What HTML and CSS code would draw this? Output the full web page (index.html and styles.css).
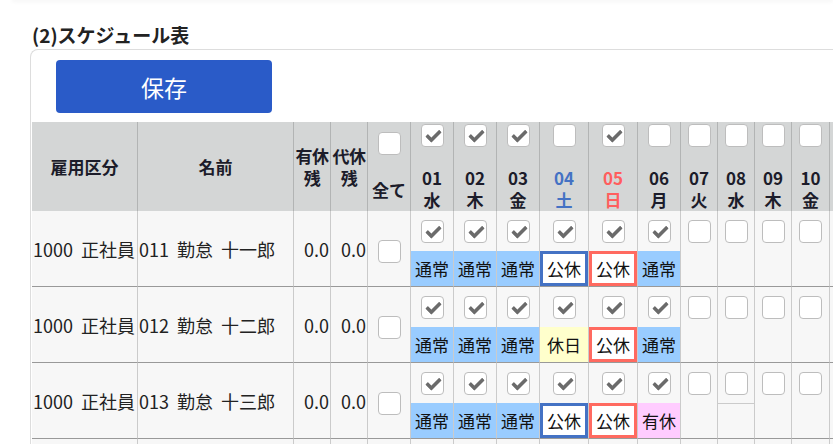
FILE: index.html
```html
<!DOCTYPE html>
<html lang="ja">
<head>
    <meta charset="UTF-8">
    <meta name="viewport" content="width=device-width, initial-scale=1.0">
    <title>スケジュール表</title>
    <link rel="stylesheet" href="styles.css">
</head>
<body>
    <div class="prev-card"></div>
    <h2 class="section-title">(2)スケジュール表</h2>
    <div class="card">
        <button class="save-button" type="button">保存</button>
        <table class="schedule">
            <colgroup>
                <col style="width:106px"><col style="width:156px"><col style="width:37px"><col style="width:37px"><col style="width:43px">
                <col style="width:43px"><col style="width:43px"><col style="width:43px"><col style="width:49px"><col style="width:49px">
                <col style="width:43px"><col style="width:37px"><col style="width:37px"><col style="width:37px"><col style="width:38px">
                <col style="width:43px"><col style="width:43px">
            </colgroup>
            <thead>
                <tr>
                    <th>雇用区分</th>
                    <th>名前</th>
                    <th class="tight">有休<br>残</th>
                    <th class="tight">代休<br>残</th>
                    <th class="all-head"><span class="cb"></span><span class="all-label">全て</span></th>
                    <th class="day"><div class="day-head"><span class="cb on"></span><span>01<br>水</span></div></th>
                    <th class="day"><div class="day-head"><span class="cb on"></span><span>02<br>木</span></div></th>
                    <th class="day"><div class="day-head"><span class="cb on"></span><span>03<br>金</span></div></th>
                    <th class="day sat"><div class="day-head"><span class="cb"></span><span>04<br>土</span></div></th>
                    <th class="day sun"><div class="day-head"><span class="cb on"></span><span>05<br>日</span></div></th>
                    <th class="day"><div class="day-head"><span class="cb"></span><span>06<br>月</span></div></th>
                    <th class="day"><div class="day-head"><span class="cb"></span><span>07<br>火</span></div></th>
                    <th class="day"><div class="day-head"><span class="cb"></span><span>08<br>水</span></div></th>
                    <th class="day"><div class="day-head"><span class="cb"></span><span>09<br>木</span></div></th>
                    <th class="day"><div class="day-head"><span class="cb"></span><span>10<br>金</span></div></th>
                    <th class="day sat"><div class="day-head"><span class="cb"></span><span>11<br>土</span></div></th>
                    <th class="day sun"><div class="day-head"><span class="cb"></span><span>12<br>日</span></div></th>
                </tr>
            </thead>
            <tbody>
                <tr>
                    <td>1000 正社員</td>
                    <td>011 勤怠 十一郎</td>
                    <td class="num">0.0</td>
                    <td class="num">0.0</td>
                    <td class="center"><span class="cb"></span></td>
                    <td class="day"><div class="chk-area"><span class="cb on"></span></div><div class="shift normal">通常</div></td>
                    <td class="day"><div class="chk-area"><span class="cb on"></span></div><div class="shift normal">通常</div></td>
                    <td class="day"><div class="chk-area"><span class="cb on"></span></div><div class="shift normal">通常</div></td>
                    <td class="day"><div class="chk-area"><span class="cb on"></span></div><div class="shift off sat">公休</div></td>
                    <td class="day"><div class="chk-area"><span class="cb on"></span></div><div class="shift off sun">公休</div></td>
                    <td class="day"><div class="chk-area"><span class="cb on"></span></div><div class="shift normal">通常</div></td>
                    <td class="day"><div class="chk-area"><span class="cb"></span></div></td>
                    <td class="day"><div class="chk-area"><span class="cb"></span></div></td>
                    <td class="day"><div class="chk-area"><span class="cb"></span></div></td>
                    <td class="day"><div class="chk-area"><span class="cb"></span></div></td>
                    <td class="day"><div class="chk-area"><span class="cb"></span></div></td>
                    <td class="day"><div class="chk-area"><span class="cb"></span></div></td>
                </tr>
                <tr>
                    <td>1000 正社員</td>
                    <td>012 勤怠 十二郎</td>
                    <td class="num">0.0</td>
                    <td class="num">0.0</td>
                    <td class="center"><span class="cb"></span></td>
                    <td class="day"><div class="chk-area"><span class="cb on"></span></div><div class="shift normal">通常</div></td>
                    <td class="day"><div class="chk-area"><span class="cb on"></span></div><div class="shift normal">通常</div></td>
                    <td class="day"><div class="chk-area"><span class="cb on"></span></div><div class="shift normal">通常</div></td>
                    <td class="day"><div class="chk-area"><span class="cb on"></span></div><div class="shift holiday">休日</div></td>
                    <td class="day"><div class="chk-area"><span class="cb on"></span></div><div class="shift off sun">公休</div></td>
                    <td class="day"><div class="chk-area"><span class="cb on"></span></div><div class="shift normal">通常</div></td>
                    <td class="day"><div class="chk-area"><span class="cb"></span></div></td>
                    <td class="day"><div class="chk-area"><span class="cb"></span></div></td>
                    <td class="day"><div class="chk-area"><span class="cb"></span></div></td>
                    <td class="day"><div class="chk-area"><span class="cb"></span></div></td>
                    <td class="day"><div class="chk-area"><span class="cb"></span></div></td>
                    <td class="day"><div class="chk-area"><span class="cb"></span></div></td>
                </tr>
                <tr>
                    <td>1000 正社員</td>
                    <td>013 勤怠 十三郎</td>
                    <td class="num">0.0</td>
                    <td class="num">0.0</td>
                    <td class="center"><span class="cb"></span></td>
                    <td class="day"><div class="chk-area"><span class="cb on"></span></div><div class="shift normal">通常</div></td>
                    <td class="day"><div class="chk-area"><span class="cb on"></span></div><div class="shift normal">通常</div></td>
                    <td class="day"><div class="chk-area"><span class="cb on"></span></div><div class="shift normal">通常</div></td>
                    <td class="day"><div class="chk-area"><span class="cb on"></span></div><div class="shift off sat">公休</div></td>
                    <td class="day"><div class="chk-area"><span class="cb on"></span></div><div class="shift off sun">公休</div></td>
                    <td class="day"><div class="chk-area"><span class="cb on"></span></div><div class="shift paid">有休</div></td>
                    <td class="day"><div class="chk-area"><span class="cb"></span></div></td>
                    <td class="day"><div class="chk-area"><span class="cb"></span></div><div class="shift empty"></div></td>
                    <td class="day"><div class="chk-area"><span class="cb"></span></div></td>
                    <td class="day"><div class="chk-area"><span class="cb"></span></div></td>
                    <td class="day"><div class="chk-area"><span class="cb"></span></div></td>
                    <td class="day"><div class="chk-area"><span class="cb"></span></div></td>
                </tr>
                <tr>
                    <td>1000 正社員</td>
                    <td>014 勤怠 十四郎</td>
                    <td class="num">0.0</td>
                    <td class="num">0.0</td>
                    <td class="center"><span class="cb"></span></td>
                    <td class="day"><div class="chk-area"><span class="cb on"></span></div><div class="shift normal">通常</div></td>
                    <td class="day"><div class="chk-area"><span class="cb on"></span></div><div class="shift normal">通常</div></td>
                    <td class="day"><div class="chk-area"><span class="cb on"></span></div><div class="shift normal">通常</div></td>
                    <td class="day"><div class="chk-area"><span class="cb on"></span></div><div class="shift off sat">公休</div></td>
                    <td class="day"><div class="chk-area"><span class="cb on"></span></div><div class="shift off sun">公休</div></td>
                    <td class="day"><div class="chk-area"><span class="cb on"></span></div><div class="shift normal">通常</div></td>
                    <td class="day"><div class="chk-area"><span class="cb"></span></div></td>
                    <td class="day"><div class="chk-area"><span class="cb"></span></div></td>
                    <td class="day"><div class="chk-area"><span class="cb"></span></div></td>
                    <td class="day"><div class="chk-area"><span class="cb"></span></div></td>
                    <td class="day"><div class="chk-area"><span class="cb"></span></div></td>
                    <td class="day"><div class="chk-area"><span class="cb"></span></div></td>
                </tr>
            </tbody>
        </table>
    </div>
</body>
</html>
```

FILE: styles.css
```css
html, body {
    overflow: hidden;
}
body {
    margin: 0;
    padding: 0;
    font-family: "Noto Sans CJK JP", "Noto Sans", sans-serif;
    color: #222;
    background-color: #fff;
}
.prev-card {
    height: 2px;
    margin-left: 12px;
    margin-top: -2px;
    background-color: #fff;
    box-shadow: 0 1px 4px rgba(0, 0, 0, 0.08);
}
.section-title {
    margin: 22px 0 1px 32px;
    font-size: 19px;
    line-height: 26px;
    font-weight: bold;
    color: #222;
}
.card {
    width: max-content;
    margin-left: 30px;
    padding: 10px 0 0 1px;
    border: 1px solid #ddd;
    border-right: none;
    border-radius: 8px 0 0 0;
    background-color: #fff;
}
.save-button {
    display: block;
    width: 216px;
    height: 53px;
    margin: 0 0 9px 24px;
    padding: 0;
    background-color: #2a5bc8;
    color: #fff;
    border: none;
    border-radius: 4px;
    font-family: inherit;
    font-size: 23px;
    cursor: pointer;
}
.schedule {
    table-layout: fixed;
    border-collapse: separate;
    border-spacing: 0;
    width: 843px;
}
.schedule th,
.schedule td {
    padding: 0;
    border-right: 1px solid #cbcbcb;
    white-space: nowrap;
    overflow: hidden;
}
.schedule th {
    height: 89px;
    background-color: #d4d6d6;
    border-right-color: #b2b4b4;
    font-size: 17px;
    line-height: 22px;
    font-weight: bold;
    color: #1c1c2a;
    text-align: center;
    vertical-align: middle;
}
.schedule th.tight {
    letter-spacing: -0.5px;
    overflow: visible;
}
.all-head .cb {
    display: block;
    margin: 0 auto 24px;
}
.all-label {
    display: block;
}
.schedule th.day {
    vertical-align: top;
}
.day-head {
    display: flex;
    flex-direction: column;
    align-items: center;
    justify-content: space-between;
    height: 87px;
    padding-top: 2px;
}
.schedule th.sat {
    color: #4472c4;
}
.schedule th.sun {
    color: #ff5e5e;
}
.schedule td {
    height: 75px;
    background-color: #f7f7f7;
    border-bottom: 1px solid #999;
    font-size: 18px;
    word-spacing: 4px;
    vertical-align: middle;
    padding-left: 1px;
}
.schedule td.num {
    text-align: right;
    padding: 0 1px 0 0;
}
.schedule td.center {
    text-align: center;
    padding: 0;
}
.schedule td.center .cb {
    vertical-align: middle;
    margin-top: 3px;
}
.schedule td.day {
    padding: 0;
    vertical-align: top;
}
.chk-area {
    height: 40px;
    display: flex;
    align-items: center;
    justify-content: center;
}
.shift {
    height: 35px;
    box-sizing: border-box;
    font-size: 17px;
    line-height: 35px;
    text-align: center;
    color: #111;
}
.shift.normal {
    background-color: #99ccff;
}
.shift.holiday {
    background-color: #ffffcc;
}
.shift.paid {
    background-color: #ffccff;
}
.shift.off {
    background-color: #fff;
    line-height: 29px;
    border: 3px solid #fff;
}
.shift.off.sat {
    border-color: #4472c4;
}
.shift.off.sun {
    border-color: #ff6a60;
}
.shift.empty {
    border-top: 1px solid #cbcbcb;
}
.cb {
    display: inline-block;
    box-sizing: border-box;
    width: 23px;
    height: 23px;
    background-color: #fff;
    border: 1px solid #bdbdbd;
    border-radius: 4px;
    position: relative;
}
.cb.on::after {
    content: "";
    position: absolute;
    left: 7px;
    top: 2px;
    width: 5px;
    height: 11px;
    border-right: 4px solid #6b6b6b;
    border-bottom: 4px solid #6b6b6b;
    border-radius: 1px;
    transform: rotate(45deg);
}
```
